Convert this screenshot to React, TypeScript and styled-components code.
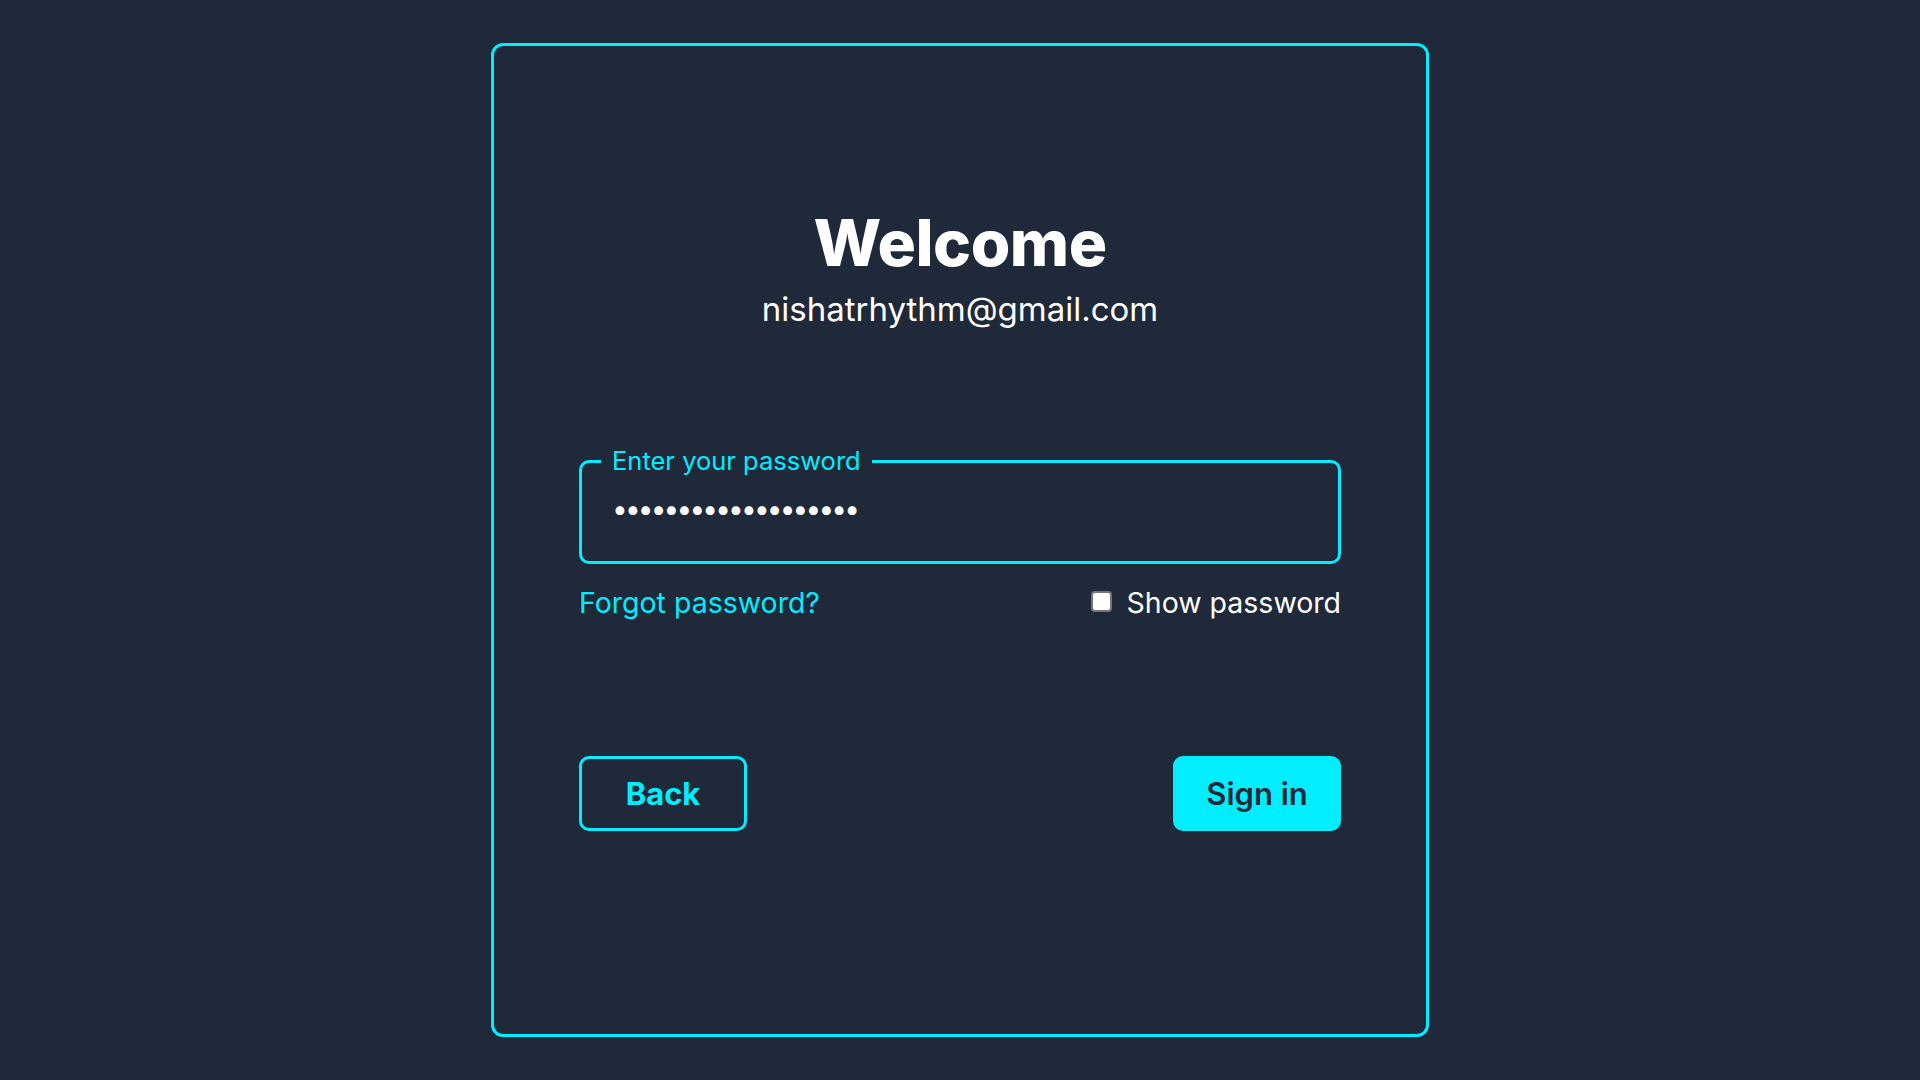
import React from "react";
import styled, { createGlobalStyle } from "styled-components";

const CYAN = "#00eeff";
const BG = "#1f2939";

const Global = createGlobalStyle`
  html, body {
    margin: 0;
    padding: 0;
    background: ${BG};
  }
  body {
    font-family: Inter, "Noto Sans", sans-serif;
    color: #ffffff;
  }
`;

const Page = styled.main`
  min-height: 100vh;
  display: flex;
  justify-content: center;
  align-items: center;
`;

const Card = styled.section`
  box-sizing: border-box;
  width: 938px;
  height: 92vh;
  border: 3px solid ${CYAN};
  border-radius: 12px;
  padding: 158px 85px 0;
  display: flex;
  flex-direction: column;
`;

const Header = styled.header`
  display: flex;
  flex-direction: column;
  align-items: center;
`;

const Title = styled.h1`
  margin: 0;
  font-size: 64px;
  line-height: 77px;
  font-weight: 800;
  letter-spacing: -0.5px;
`;

const Email = styled.p`
  margin: 8px 0 0;
  font-size: 33px;
  line-height: 40px;
  font-weight: 400;
`;

const Field = styled.fieldset`
  margin: 117px 0 0;
  padding: 13px 30px 31.5px;
  border: 3px solid ${CYAN};
  border-radius: 10px;
  min-width: 0;
`;

const Legend = styled.legend`
  margin-left: -11px;
  padding: 0 11px;
  color: ${CYAN};
  font-size: 25.5px;
  line-height: 30px;
`;

const PasswordInput = styled.input`
  display: block;
  width: 100%;
  height: 40px;
  box-sizing: border-box;
  background: transparent;
  border: none;
  outline: none;
  color: #ffffff;
  font-family: Inter, sans-serif;
  font-size: 28px;
  letter-spacing: -2.85px;
  padding: 0;
`;

const OptionsRow = styled.div`
  display: flex;
  justify-content: space-between;
  align-items: center;
  margin-top: 21px;
  font-size: 28.5px;
  line-height: 36px;
`;

const ForgotLink = styled.a`
  color: ${CYAN};
  text-decoration: none;
`;

const ShowLabel = styled.label`
  display: flex;
  align-items: center;
  gap: 15px;
  color: #ffffff;
`;

const Checkbox = styled.input`
  appearance: none;
  margin: 0 0 3px;
  width: 21px;
  height: 21px;
  box-sizing: border-box;
  background: #ffffff;
  border: 2px solid #767676;
  border-radius: 4px;
`;

const Actions = styled.div`
  display: flex;
  justify-content: space-between;
  margin-top: 135px;
`;

const Button = styled.button<{ $primary?: boolean }>`
  box-sizing: border-box;
  width: 168px;
  height: 75px;
  border-radius: 10px;
  font-family: Inter, sans-serif;
  font-size: 31px;
  font-weight: ${(p) => (p.$primary ? 600 : 700)};
  border: 3px solid ${CYAN};
  background: ${(p) => (p.$primary ? CYAN : "transparent")};
  color: ${(p) => (p.$primary ? BG : CYAN)};
  cursor: pointer;
`;

export default function App() {
  return (
    <>
      <Global />
      <Page>
        <Card>
          <Header>
            <Title>Welcome</Title>
            <Email>nishatrhythm@gmail.com</Email>
          </Header>
          <Field>
            <Legend>Enter your password</Legend>
            <PasswordInput type="password" defaultValue="nishatrhythm1234567" />
          </Field>
          <OptionsRow>
            <ForgotLink href="#">Forgot password?</ForgotLink>
            <ShowLabel>
              <Checkbox type="checkbox" />
              Show password
            </ShowLabel>
          </OptionsRow>
          <Actions>
            <Button>Back</Button>
            <Button $primary>Sign in</Button>
          </Actions>
        </Card>
      </Page>
    </>
  );
}
